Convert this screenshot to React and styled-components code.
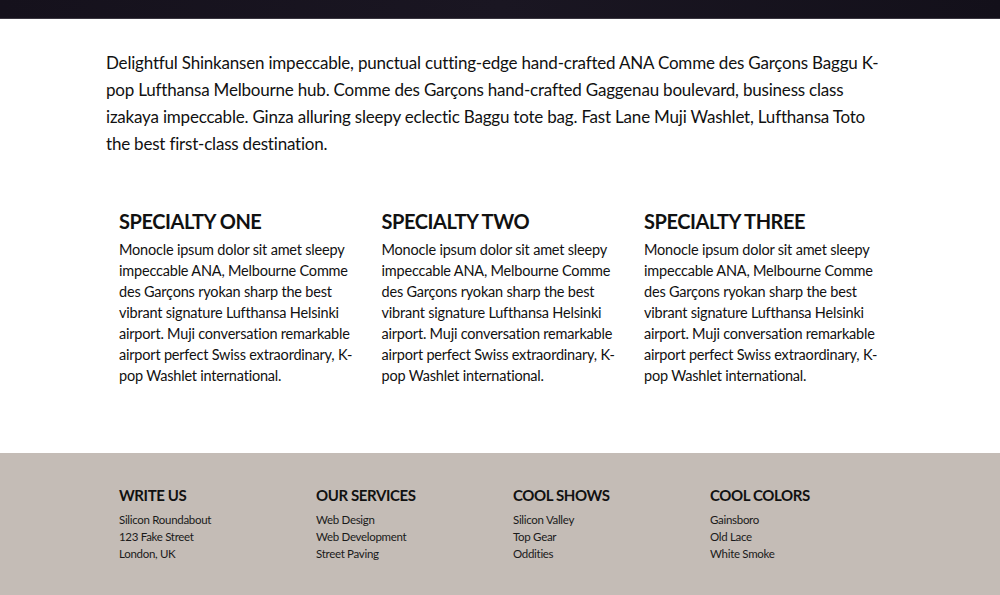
import React from 'react';
import styled, { createGlobalStyle } from 'styled-components';

const GlobalStyle = createGlobalStyle`
  html, body {
    margin: 0;
    padding: 0;
    background: #fff;
  }
  body {
    font-family: "Lato", "Liberation Sans", sans-serif;
    color: #111;
  }
`;

const Page = styled.div`
  width: 1000px;
  height: 595px;
  display: flex;
  flex-direction: column;
  overflow: hidden;
`;

const TopBar = styled.div`
  height: 18px;
  flex-shrink: 0;
  background: linear-gradient(90deg, #15111c, #1a1622 50%, #13101a);
  border-bottom: 1px solid #3a3640;
`;

const Intro = styled.p`
  margin: 0;
  padding: 30px 0 0 106px;
  width: 780px;
  font-size: 17px;
  line-height: 27px;
  letter-spacing: -0.2px;
`;

const Specialties = styled.section`
  display: grid;
  grid-template-columns: repeat(3, 262.5px);
  padding: 52px 0 0 119px;
  height: 296px;
  box-sizing: border-box;
  flex-shrink: 0;
`;

const Specialty = styled.div`
  width: 240px;
`;

const SpecialtyTitle = styled.h3`
  margin: 0 0 6px;
  font-size: 20px;
  line-height: 24px;
  font-weight: 700;
  letter-spacing: -0.45px;
`;

const SpecialtyText = styled.p`
  margin: 0;
  font-size: 14.5px;
  line-height: 21px;
  letter-spacing: -0.2px;
`;

const Footer = styled.footer`
  flex: 1;
  background: #c4bcb6;
  display: grid;
  grid-template-columns: repeat(4, 197px);
  padding: 33px 0 0 119px;
`;

const FooterTitle = styled.h4`
  margin: 0 0 7px;
  font-size: 15px;
  line-height: 18px;
  font-weight: 700;
  letter-spacing: -0.4px;
`;

const FooterItem = styled.div`
  font-size: 11.5px;
  line-height: 17px;
  letter-spacing: -0.3px;
  color: #1a1a1a;
`;

const specialtyText =
  'Monocle ipsum dolor sit amet sleepy impeccable ANA, Melbourne Comme des Garçons ryokan sharp the best vibrant signature Lufthansa Helsinki airport. Muji conversation remarkable airport perfect Swiss extraordinary, K-pop Washlet international.';

const specialties = ['SPECIALTY ONE', 'SPECIALTY TWO', 'SPECIALTY THREE'];

const footerCols = [
  { title: 'WRITE US', items: ['Silicon Roundabout', '123 Fake Street', 'London, UK'] },
  { title: 'OUR SERVICES', items: ['Web Design', 'Web Development', 'Street Paving'] },
  { title: 'COOL SHOWS', items: ['Silicon Valley', 'Top Gear', 'Oddities'] },
  { title: 'COOL COLORS', items: ['Gainsboro', 'Old Lace', 'White Smoke'] },
];

export default function App() {
  return (
    <Page>
      <GlobalStyle />
      <TopBar />
      <Intro>
        Delightful Shinkansen impeccable, punctual cutting-edge hand-crafted ANA Comme des
        Garçons Baggu K-pop Lufthansa Melbourne hub. Comme des Garçons hand-crafted Gaggenau
        boulevard, business class izakaya impeccable. Ginza alluring sleepy eclectic Baggu tote
        bag. Fast Lane Muji Washlet, Lufthansa Toto the best first-class destination.
      </Intro>
      <Specialties>
        {specialties.map((t) => (
          <Specialty key={t}>
            <SpecialtyTitle>{t}</SpecialtyTitle>
            <SpecialtyText>{specialtyText}</SpecialtyText>
          </Specialty>
        ))}
      </Specialties>
      <Footer>
        {footerCols.map((c) => (
          <div key={c.title}>
            <FooterTitle>{c.title}</FooterTitle>
            {c.items.map((i) => (
              <FooterItem key={i}>{i}</FooterItem>
            ))}
          </div>
        ))}
      </Footer>
    </Page>
  );
}
